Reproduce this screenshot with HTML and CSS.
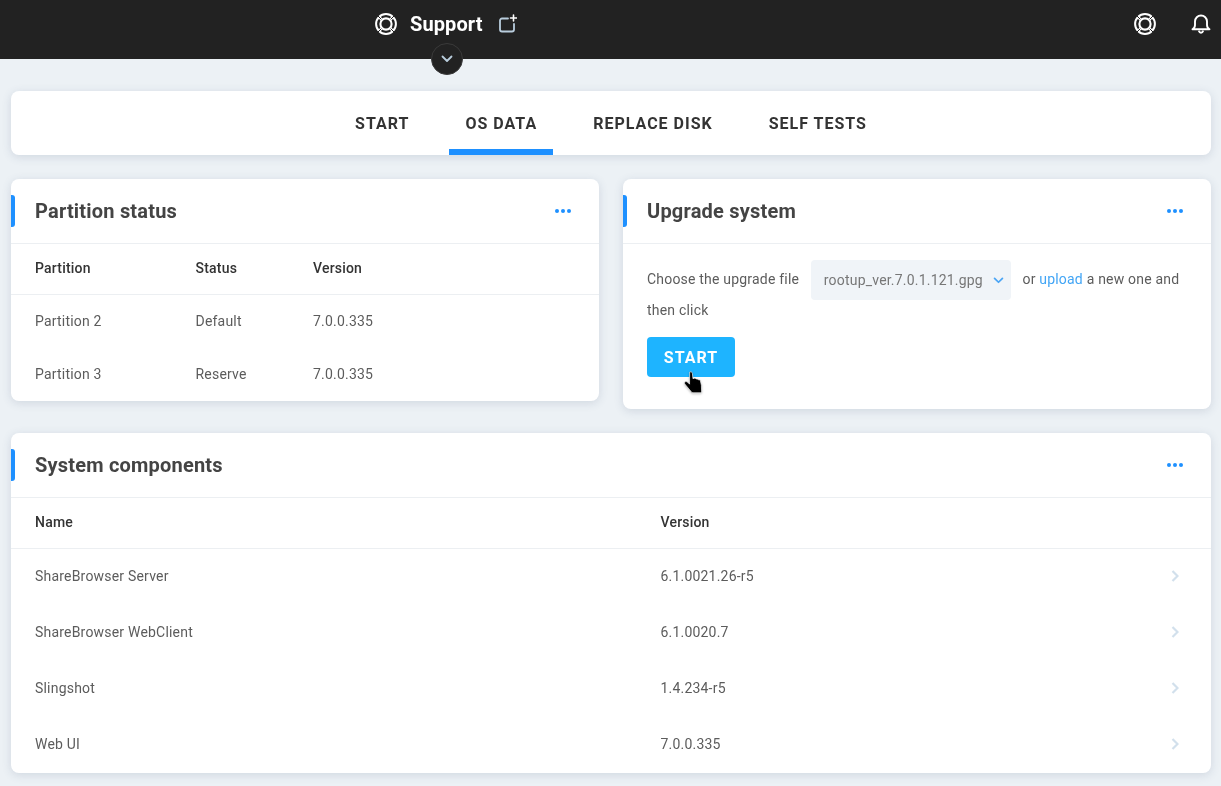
FILE: index.html
```html
<!DOCTYPE html>
<html lang="en">
<head>
<meta charset="utf-8">
<title>Support</title>
<link rel="stylesheet" href="styles.css">
</head>
<body>
<header class="topbar">
  <div class="brand">
    <svg class="buoy" viewBox="0 0 24 24"><use href="#buoy"/></svg>
    <span class="brand-title">Support</span>
    <svg class="add-window" viewBox="0 0 20 20" fill="none"><path d="M11 4.500H5a2 2 0 0 0-2 2v9a2 2 0 0 0 2 2h10a2 2 0 0 0 2-2V10" stroke="#b9cddd" stroke-width="1.800" stroke-linecap="round"/><path d="M16.500 1v6M13.500 4h6" stroke="#fff" stroke-width="1.600" stroke-linecap="round"/></svg>
  </div>
  <div class="top-actions">
    <svg class="buoy" viewBox="0 0 24 24"><use href="#buoy"/></svg>
    <svg class="bell" viewBox="0 0 20 20" fill="none" stroke="#fff" stroke-width="1.900" stroke-linecap="round" stroke-linejoin="round"><path d="M1.500 15.300c1.700-1 2.500-2.400 2.500-4.300V7.500a6 6 0 0 1 12 0V11c0 1.900.8 3.300 2.500 4.300z"/><path d="M8 17.300a2.100 2.100 0 0 0 4 0"/></svg>
  </div>
  <button class="collapse" type="button" aria-label="Collapse"><svg viewBox="0 0 12 8" fill="none"><path d="M1.500 1.500 6 6l4.500-4.500" stroke="#b9cddd" stroke-width="1.800" stroke-linecap="round" stroke-linejoin="round"/></svg></button>
</header>

<svg class="defs" width="0" height="0" aria-hidden="true"><defs>
  <g id="buoy" fill="none">
    <circle cx="12" cy="12" r="9.900" stroke="#fff" stroke-width="2"/>
    <circle cx="12" cy="12" r="5.600" stroke="#fff" stroke-width="2.100"/>
    <path d="M4.600 4.600 8 8M19.400 4.600 16 8M4.600 19.400 8 16M19.400 19.400 16 16" stroke="#fff" stroke-width="2.600"/>
    <path d="M3.500 3.500 7.400 7.400M20.500 3.500 16.600 7.400M3.500 20.500 7.400 16.600M20.500 20.500 16.600 16.600" stroke="#222" stroke-width="1"/>
  </g>
</defs></svg>

<main class="content">
  <nav class="tabs">
    <a class="tab">START</a>
    <a class="tab active">OS DATA</a>
    <a class="tab">REPLACE DISK</a>
    <a class="tab">SELF TESTS</a>
  </nav>

  <div class="columns">
    <section class="card">
      <div class="card-head">
        <h2>Partition status</h2>
        <span class="dots"><i></i><i></i><i></i></span>
      </div>
      <table class="data partition">
        <colgroup><col class="p-name"><col class="p-status"><col></colgroup>
        <thead><tr><th>Partition</th><th>Status</th><th>Version</th></tr></thead>
        <tbody>
          <tr><td>Partition 2</td><td>Default</td><td>7.0.0.335</td></tr>
          <tr><td>Partition 3</td><td>Reserve</td><td>7.0.0.335</td></tr>
        </tbody>
      </table>
    </section>

    <section class="card">
      <div class="card-head">
        <h2>Upgrade system</h2>
        <span class="dots"><i></i><i></i><i></i></span>
      </div>
      <div class="upgrade">
        <p class="upgrade-text">Choose the upgrade file
          <span class="select">rootup_ver.7.0.1.121.gpg<svg viewBox="0 0 12 8" fill="none"><path d="M1.500 1.500 6 6l4.500-4.500" stroke="#4aa5f5" stroke-width="2" stroke-linecap="round" stroke-linejoin="round"/></svg></span>
          or <a class="link">upload</a> a new one and then click</p>
        <div class="btn-wrap">
          <button class="btn" type="button">START</button>
          <svg class="pointer" viewBox="1 0 17 21"><path d="M6 1c1.200-.6 2.300.1 2.500 1.300l.5 4.700 1.300-.4c.8-.2 1.400.1 1.700.8.800-.4 1.600-.1 1.900.7.800-.3 1.600 0 1.900.8l.9 4.100.2 5.500c0 .8-.5 1.400-1.300 1.400H9c-.6 0-1.100-.3-1.400-.8L1.500 11.800c-.5-.9-.1-1.800.8-2.100.8-.2 1.600.1 2.100.7l1.500 1.600z" fill="#000" stroke="#fff" stroke-width=".6"/></svg>
        </div>
      </div>
    </section>
  </div>

  <section class="card">
    <div class="card-head">
      <h2>System components</h2>
      <span class="dots"><i></i><i></i><i></i></span>
    </div>
    <table class="data comps">
      <colgroup><col class="c-name"><col><col class="c-arrow"></colgroup>
      <thead><tr><th>Name</th><th colspan="2">Version</th></tr></thead>
      <tbody>
        <tr><td>ShareBrowser Server</td><td>6.1.0021.26-r5</td><td class="arrow"><svg viewBox="0 0 8 14" fill="none"><path d="M1.500 2 6.500 7l-5 5" stroke="#d2e0ec" stroke-width="2.200"/></svg></td></tr>
        <tr><td>ShareBrowser WebClient</td><td>6.1.0020.7</td><td class="arrow"><svg viewBox="0 0 8 14" fill="none"><path d="M1.500 2 6.500 7l-5 5" stroke="#d2e0ec" stroke-width="2.200"/></svg></td></tr>
        <tr><td>Slingshot</td><td>1.4.234-r5</td><td class="arrow"><svg viewBox="0 0 8 14" fill="none"><path d="M1.500 2 6.500 7l-5 5" stroke="#d2e0ec" stroke-width="2.200"/></svg></td></tr>
        <tr><td>Web UI</td><td>7.0.0.335</td><td class="arrow"><svg viewBox="0 0 8 14" fill="none"><path d="M1.500 2 6.500 7l-5 5" stroke="#d2e0ec" stroke-width="2.200"/></svg></td></tr>
      </tbody>
    </table>
  </section>
</main>
</body>
</html>
```
FILE: styles.css
```css
* { box-sizing: border-box; }
html, body { margin: 0; height: 100%; overflow: hidden; }
body {
  background: #ecf1f5;
  font-family: Roboto, "Liberation Sans", sans-serif;
  font-size: 14px;
  letter-spacing: .2px;
  color: #5c5c5c;
}
.defs { position: absolute; }

.topbar {
  position: relative;
  height: 59px;
  background: #222;
  display: flex;
  align-items: center;
  justify-content: space-between;
  padding: 0 10px 11px 374px;
}
.brand { display: flex; align-items: center; will-change: transform; }
.buoy { width: 24px; height: 24px; display: block; }
.brand-title {
  margin-left: 12px;
  font-size: 20px;
  font-weight: 700;
  letter-spacing: .1px;
  color: #fff;
}
.add-window { width: 20px; height: 20px; margin-left: 14px; display: block; }
.top-actions { display: flex; align-items: center; gap: 34px; }
.bell { width: 20px; height: 20px; display: block; }
.collapse {
  position: absolute;
  left: 431px;
  top: 43px;
  width: 32px;
  height: 32px;
  padding: 0;
  border: 1px solid #3a3a3a;
  border-radius: 50%;
  background: #222;
  display: flex;
  align-items: center;
  justify-content: center;
}
.collapse svg { width: 12px; height: 8px; display: block; }

.content { padding: 32px 10px 0 11px; display: flex; flex-direction: column; gap: 24px; will-change: transform; }
.card, .tabs {
  background: #fff;
  border-radius: 8px;
  box-shadow: 0 2px 10px rgba(60, 80, 120, .16);
}
.tabs { height: 64px; display: flex; justify-content: center; gap: 24px; }
.tab {
  height: 64px;
  padding: 6px 16px 0;
  display: flex;
  align-items: center;
  font-size: 16px;
  font-weight: 700;
  letter-spacing: 1px;
  color: #333;
  border-bottom: 6px solid transparent;
}
.tab.active { border-bottom-color: #1e90ff; }

.columns { display: grid; grid-template-columns: 588px 588px; gap: 24px; align-items: start; }

.card-head {
  position: relative;
  height: 65px;
  border-bottom: 1px solid #eceff2;
  display: flex;
  align-items: center;
  justify-content: space-between;
  padding: 0 28px 0 24px;
}
.card-head::before {
  content: "";
  position: absolute;
  left: 0;
  top: 16px;
  width: 4px;
  height: 32px;
  background: #1e90ff;
  border-radius: 0 3px 3px 0;
}
h2 { margin: 0; font-size: 20px; font-weight: 700; color: #444; }
.dots { display: flex; gap: 2px; }
.dots i { width: 4px; height: 4px; border-radius: 50%; background: #1e90ff; display: block; }

.data { width: 100%; border-collapse: separate; border-spacing: 0; table-layout: fixed; }
.data th {
  height: 51px;
  padding: 0 0 3px 24px;
  text-align: left;
  font-weight: 500;
  color: #333;
  border-bottom: 1px solid #eceff2;
}
.data td { padding: 0 0 0 24px; color: #5c5c5c; }
.partition td { height: 53px; padding-bottom: 1px; }
.p-name { width: 160.500px; }
.p-status { width: 117.500px; }
.comps td { height: 56px; padding-bottom: 2px; }
.c-name { width: 625.500px; }
.c-arrow { width: 48px; }
.comps .arrow { padding: 0 0 2px; }
.arrow svg { width: 8px; height: 14px; display: block; margin-left: 8px; }

.upgrade { padding: 16px 24px 32px; }
.upgrade-text { margin: 0; line-height: 20px; }
.select {
  display: inline-flex;
  align-items: center;
  justify-content: space-between;
  width: 200px;
  height: 40px;
  margin: 0 8px;
  padding: 0 7px 0 13px;
  background: #f0f4f8;
  border-radius: 4px;
  color: #777;
  vertical-align: middle;
}
.select svg { width: 11px; height: 7px; display: block; }
.link { color: #42a5f5; }
.btn-wrap { position: relative; margin-top: 17px; width: 88px; }
.btn {
  display: block;
  width: 88px;
  height: 40px;
  padding: 1px 0 0;
  border: 0;
  border-radius: 4px;
  background: #1eb4ff;
  color: #fff;
  font-family: inherit;
  font-size: 16px;
  font-weight: 700;
  letter-spacing: 1px;
}
.pointer { position: absolute; left: 37px; top: 34px; width: 19px; height: 23px; filter: drop-shadow(0 1px 1px rgba(0, 0, 0, .25)); }
```
